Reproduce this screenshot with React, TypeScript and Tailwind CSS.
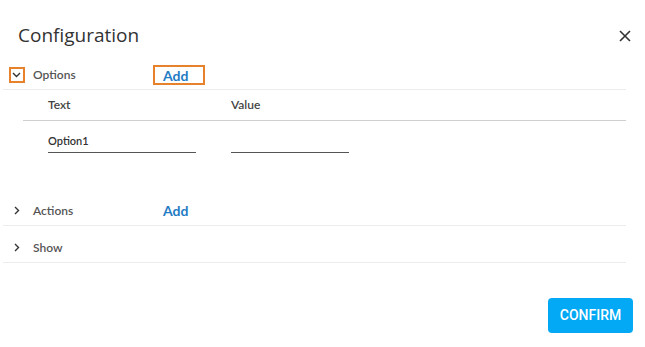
import React from 'react'

type Section = {
  label: string
  open?: boolean
  add?: boolean
  focused?: boolean
}

const sections: Section[] = [
  { label: 'Options', open: true, add: true, focused: true },
  { label: 'Actions', add: true },
  { label: 'Show' },
]

function ChevronDown() {
  return (
    <svg width="9" height="6" viewBox="0 0 9 6" fill="none">
      <path d="M1 1l3.5 3.5L8 1" stroke="#333" strokeWidth="1.4" />
    </svg>
  )
}

function ChevronRight() {
  return (
    <svg width="6" height="9" viewBox="0 0 6 9" fill="none">
      <path d="M1 1l3.5 3.5L1 8" stroke="#333" strokeWidth="1.4" />
    </svg>
  )
}

function SectionRow({ section }: { section: Section }) {
  return (
    <div className="flex h-[29px] items-center border-b border-[#ececec]">
      <div className="flex w-[27px] justify-center">
        {section.open ? (
          <span className="flex h-[16px] w-[16px] items-center justify-center border-2 border-[#e8812c]">
            <ChevronDown />
          </span>
        ) : (
          <ChevronRight />
        )}
      </div>
      <span className="ml-[3px] w-[120px] text-[12px] font-semibold text-[#555]">{section.label}</span>
      {section.add && (
        <span
          className={
            section.focused
              ? 'flex h-[20px] w-[52px] items-center border-2 border-[#e8812c] pl-[8px] text-[14px] font-bold text-[#1f7cc4]'
              : 'flex h-[20px] w-[52px] items-center pl-[10px] text-[14px] font-bold text-[#1f7cc4]'
          }
        >
          Add
        </span>
      )}
    </div>
  )
}

export default function App() {
  return (
    <div className="h-[347px] w-[645px] bg-white font-['Lato',sans-serif]">
      <div className="flex items-center justify-between pl-[18px] pr-[14px] pt-[20px]">
        <h1 className="font-['Open_Sans',sans-serif] text-[19px] leading-[30px] text-[#333]">Configuration</h1>
        <svg width="12" height="12" viewBox="0 0 12 12" className="mt-[2px]">
          <path d="M1 1l10 10M11 1L1 11" stroke="#333" strokeWidth="1.6" />
        </svg>
      </div>

      <div className="ml-[3px] mr-[19px] mt-[11px]">
        <SectionRow section={sections[0]} />

        <div className="ml-[20px]">
          <div className="flex h-[31px] items-center border-b border-[#cfcfcf] pl-[25px] text-[12px] font-semibold text-[#444]">
            <span className="w-[183px]">Text</span>
            <span>Value</span>
          </div>
          <div className="flex items-end pl-[25px] pt-[12px]">
            <div className="w-[148px] border-b border-[#555] pb-[2px] text-[11px] font-semibold text-[#333]">
              Option1
            </div>
            <div className="ml-[35px] w-[118px] border-b border-[#555]" />
          </div>
        </div>

        <div className="mt-[44px]">
          <SectionRow section={sections[1]} />
        </div>
        <div className="mt-[8px]">
          <SectionRow section={sections[2]} />
        </div>
      </div>

      <div className="flex justify-end pr-[12px] pt-[35px]">
        <button className="h-[35px] w-[85px] rounded-[4px] bg-[#03a9f4] font-['Roboto',sans-serif] text-[14px] font-medium text-white">
          CONFIRM
        </button>
      </div>
    </div>
  )
}
